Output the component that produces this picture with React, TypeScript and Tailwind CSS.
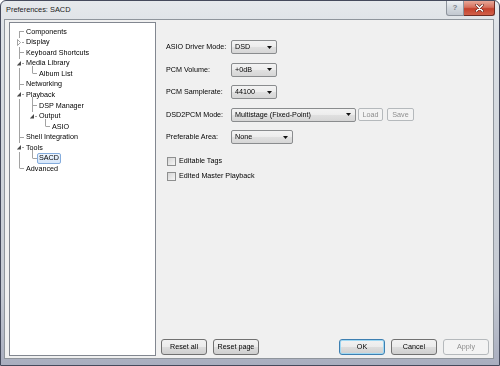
import React from "react";

type Node = { label: string; lvl: number; selected?: boolean };

const treeItems: Node[] = [
  { label: "Components", lvl: 0 },
  { label: "Display", lvl: 0 },
  { label: "Keyboard Shortcuts", lvl: 0 },
  { label: "Media Library", lvl: 0 },
  { label: "Album List", lvl: 1 },
  { label: "Networking", lvl: 0 },
  { label: "Playback", lvl: 0 },
  { label: "DSP Manager", lvl: 1 },
  { label: "Output", lvl: 1 },
  { label: "ASIO", lvl: 2 },
  { label: "Shell Integration", lvl: 0 },
  { label: "Tools", lvl: 0 },
  { label: "SACD", lvl: 1, selected: true },
  { label: "Advanced", lvl: 0 },
];

const rowPad = ["pl-[14px]", "pl-[27px]", "pl-[40px]"];

// whole-pixel row heights so the text lands on the pixel grid
const rowH = [11, 10, 11, 10, 11, 10, 11, 11, 10, 11, 10, 11, 10, 11];
const rowCls: Record<number, string> = { 10: "h-[10px]", 11: "h-[11px]" };
const rowTop = rowH.map((_, i) => rowH.slice(0, i).reduce((a, b) => a + b, 0));

// row centre inside the tree box
const cy = (i: number) => 3 + rowTop[i] + Math.floor(rowH[i] / 2);

function TreeLines() {
  const line = "#a3a3a3";
  const expanded = [3, 6, 11];
  return (
    <svg className="absolute left-0 top-0 pointer-events-none" width="146" height="200">
      {/* root trunk */}
      <line x1="9.5" y1={cy(0)} x2="9.5" y2={cy(13)} stroke={line} strokeWidth="1" />
      {[0, 1, 2, 3, 5, 6, 10, 11, 13].map((i) => (
        <line key={i} x1="9.5" y1={cy(i) + 0.5} x2="14" y2={cy(i) + 0.5} stroke={line} strokeWidth="1" />
      ))}
      {/* level 1 */}
      <line x1="22.5" y1={cy(3) + 3} x2="22.5" y2={cy(4)} stroke={line} />
      <line x1="22.5" y1={cy(4) + 0.5} x2="27" y2={cy(4) + 0.5} stroke={line} />
      <line x1="22.5" y1={cy(6) + 3} x2="22.5" y2={cy(8)} stroke={line} />
      <line x1="22.5" y1={cy(7) + 0.5} x2="27" y2={cy(7) + 0.5} stroke={line} />
      <line x1="25" y1={cy(8) + 0.5} x2="27" y2={cy(8) + 0.5} stroke={line} />
      <line x1="22.5" y1={cy(11) + 3} x2="22.5" y2={cy(12)} stroke={line} />
      <line x1="22.5" y1={cy(12) + 0.5} x2="27" y2={cy(12) + 0.5} stroke={line} />
      {/* level 2 */}
      <line x1="35.5" y1={cy(8) + 3} x2="35.5" y2={cy(9)} stroke={line} />
      <line x1="35.5" y1={cy(9) + 0.5} x2="40" y2={cy(9) + 0.5} stroke={line} />
      {/* collapsed glyph */}
      <rect x="6" y={cy(1) - 4} width="6" height="9" fill="#ffffff" />
      <polygon
        points={`7.5,${cy(1) - 2.5} 7.5,${cy(1) + 3.5} 10.5,${cy(1) + 0.5}`}
        fill="#ffffff"
        stroke="#8c8c8c"
        strokeWidth="0.8"
      />
      {/* expanded glyphs */}
      {expanded.map((i) => (
        <g key={i}>
          <rect x="6" y={cy(i) - 4} width="6" height="9" fill="#ffffff" />
          <polygon points={`11,${cy(i) - 2} 11,${cy(i) + 2.5} 6.8,${cy(i) + 2.5}`} fill="#4a4a4a" />
        </g>
      ))}
      <rect x="19" y={cy(8) - 4} width="6" height="9" fill="#ffffff" />
      <polygon points={`24,${cy(8) - 2} 24,${cy(8) + 2.5} 19.8,${cy(8) + 2.5}`} fill="#4a4a4a" />
    </svg>
  );
}

function Arrow() {
  return (
    <svg width="5" height="3" viewBox="0 0 5 3">
      <polygon points="0,0 5,0 2.5,3" fill="#111" />
    </svg>
  );
}

function Combo({ value, w }: { value: string; w: string }) {
  return (
    <div
      className={`${w} h-[14px] flex items-center justify-between pl-[3px] pr-[4px] rounded-[2px] border border-[#8a8c8e] bg-[linear-gradient(180deg,#f4f4f4_0%,#ececec_50%,#e0e0e0_51%,#d6d6d6_100%)] text-[7.2px] leading-none`}
    >
      <span>{value}</span>
      <Arrow />
    </div>
  );
}

function Btn({
  label,
  w,
  kind = "normal",
}: {
  label: string;
  w: string;
  kind?: "normal" | "default" | "disabled";
}) {
  const look =
    kind === "disabled"
      ? "border-[#b5b9bc] bg-[#f4f4f4] text-[#8d8d8d]"
      : kind === "default"
        ? "border-[#3c7fb1] bg-[linear-gradient(180deg,#f2f2f2_0%,#ebebeb_50%,#dddddd_51%,#cfcfcf_100%)] shadow-[inset_0_0_0_1px_#9fd8f4]"
        : "border-[#707070] bg-[linear-gradient(180deg,#f2f2f2_0%,#ebebeb_50%,#dddddd_51%,#cfcfcf_100%)]";
  return (
    <div
      className={`${w} h-[16px] flex items-center justify-center rounded-[3px] border text-[7.2px] leading-none ${look}`}
    >
      {label}
    </div>
  );
}

function Check({ label }: { label: string }) {
  return (
    <div className="h-[10px] flex items-center gap-[3px] ml-[1px]">
      <div className="w-[9px] h-[9px] border border-[#8e8f8f] bg-[linear-gradient(135deg,#d6d6d6,#f6f6f6)]" />
      <span className="text-[7.2px] leading-none">{label}</span>
    </div>
  );
}

function Row({ label, children }: { label: string; children: React.ReactNode }) {
  return (
    <div className="flex items-center h-[14px]">
      <span className="w-[65px] text-[7.2px] leading-none">{label}</span>
      {children}
    </div>
  );
}

export default function App() {
  return (
    <div className="w-[500px] h-[366px] flex flex-col rounded-t-[6px] border border-[#454a5c] bg-[linear-gradient(180deg,#e6e9ec_0%,#dde1e6_8%,#d1d6dc_40%,#c4c9d2_80%,#a9aebf_100%)] font-['Liberation_Sans',Arial,sans-serif] text-black overflow-hidden">
      {/* Title bar */}
      <div className="h-[18px] shrink-0 flex items-start">
        <span className="pl-[5px] h-[17px] flex items-center text-[7.4px] leading-none text-[#1a1a1a]">
          Preferences: SACD
        </span>
        <div className="ml-auto mr-[4px] flex">
          <div className="w-[18px] h-[15px] flex items-center justify-center rounded-bl-[3px] border border-t-0 border-[#8d939c] bg-[linear-gradient(180deg,#eef1f4,#d3d8de_50%,#c2c8d0)] text-[8px] font-bold leading-none text-[#7d838b]">
            ?
          </div>
          <div className="w-[31px] h-[15px] flex items-center justify-center rounded-br-[3px] border border-t-0 border-l-0 border-[#6e2b22] bg-[linear-gradient(180deg,#e8a898_0%,#d6705d_45%,#c4412c_55%,#d0604a_100%)]">
            <svg width="9" height="8" viewBox="0 0 9 8">
              <path d="M1.5 1 L7.5 7 M7.5 1 L1.5 7" stroke="#5a1a12" strokeWidth="2.6" strokeLinecap="round" />
              <path d="M1.5 1 L7.5 7 M7.5 1 L1.5 7" stroke="#ffffff" strokeWidth="1.6" strokeLinecap="round" />
            </svg>
          </div>
        </div>
      </div>

      {/* Client area */}
      <div className="flex-1 ml-[3px] mr-[5px] mb-[6px] flex border border-[#8f959c] bg-[#f0f0f0]">
        {/* Tree */}
        <div className="relative ml-[4px] mt-[2px] mb-[2px] w-[147px] border border-[#828790] bg-white">
          <TreeLines />
          <div className="relative pt-[3px] flex flex-col opacity-[0.995] [will-change:opacity]">
            {treeItems.map((n, i) => (
              <div key={n.label} className={`${rowCls[rowH[i]]} flex items-center ${rowPad[n.lvl]}`}>
                <span
                  className={`px-[1px] h-[11px] flex items-center rounded-[2px] border text-[7.2px] leading-none ${
                    n.selected
                      ? "border-[#84acdd] bg-[linear-gradient(180deg,#eef5fd,#d5e6fb)]"
                      : "border-transparent"
                  }`}
                >
                  {n.label}
                </span>
              </div>
            ))}
          </div>
        </div>

        {/* Page */}
        <div className="flex-1 flex flex-col opacity-[0.995] [will-change:opacity]">
          <div className="pt-[20px] pl-[10px] flex flex-col gap-[8.5px]">
            <Row label="ASIO Driver Mode:">
              <Combo value="DSD" w="w-[46px]" />
            </Row>
            <Row label="PCM Volume:">
              <Combo value="+0dB" w="w-[46px]" />
            </Row>
            <Row label="PCM Samplerate:">
              <Combo value="44100" w="w-[46px]" />
            </Row>
            <Row label="DSD2PCM Mode:">
              <Combo value="Multistage (Fixed-Point)" w="w-[125px]" />
              <div className="ml-[2px] w-[25px] h-[13px] flex items-center justify-center rounded-[2px] border border-[#b5b9bc] bg-[#f4f4f4] text-[7.2px] leading-none text-[#8d8d8d]">
                Load
              </div>
              <div className="ml-[4px] w-[27px] h-[13px] flex items-center justify-center rounded-[2px] border border-[#b5b9bc] bg-[#f4f4f4] text-[7.2px] leading-none text-[#8d8d8d]">
                Save
              </div>
            </Row>
            <Row label="Preferable Area:">
              <Combo value="None" w="w-[62px]" />
            </Row>
          </div>
          <div className="pl-[10px] mt-[12px] flex flex-col gap-[5px]">
            <Check label="Editable Tags" />
            <Check label="Edited Master Playback" />
          </div>

          <div className="mt-auto mb-[3px] pl-[5px] pr-[4px] flex items-center gap-[6px]">
            <Btn label="Reset all" w="w-[46px]" />
            <Btn label="Reset page" w="w-[46px]" />
            <div className="flex-1" />
            <Btn label="OK" w="w-[46px]" kind="default" />
            <Btn label="Cancel" w="w-[46px]" />
            <Btn label="Apply" w="w-[46px]" kind="disabled" />
          </div>
        </div>
      </div>
    </div>
  );
}
